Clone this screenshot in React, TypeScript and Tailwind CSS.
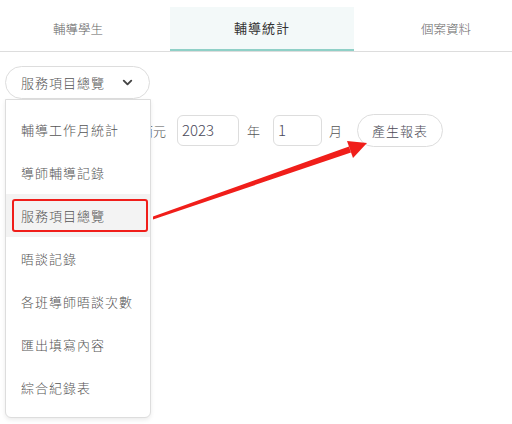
import React from 'react';
import { ChevronDown } from 'lucide-react';

const tabs = ['輔導學生', '輔導統計', '個案資料'];

const menuItems = [
  '輔導工作月統計',
  '導師輔導記錄',
  '服務項目總覽',
  '晤談記錄',
  '各班導師晤談次數',
  '匯出填寫內容',
  '綜合紀錄表',
];

const App = () => {
  return (
    <div
      className="relative w-full h-[424px] bg-white overflow-hidden font-light"
      style={{ fontFamily: '"Noto Sans CJK TC", "Noto Sans", sans-serif' }}
    >
      {/* tabs */}
      <div className="mt-[7px] flex border-b border-[#dddddd]">
        <div className="ml-[-14px] flex">
          {tabs.map((t, i) =>
            i === 1 ? (
              <div
                key={t}
                className="w-[184px] h-[44px] -mb-px flex items-center justify-center bg-[#f3f9f9] border-b-2 border-[#8fd0c7] text-[13px] tracking-[1px] text-[#333] font-normal"
              >
                {t}
              </div>
            ) : (
              <div
                key={t}
                className="w-[184px] h-[44px] flex items-center justify-center text-[12.5px] text-[#666]"
              >
                {t}
              </div>
            )
          )}
        </div>
      </div>

      {/* select */}
      <div className="mt-[14px] ml-[5px] w-[145px] h-[33px] rounded-full border border-[#dddddd] flex items-center justify-between pl-[15px] pr-[14px] text-[13px] tracking-[1px] text-[#555]">
        <span>服務項目總覽</span>
        <ChevronDown className="w-[15px] h-[15px] text-[#444]" strokeWidth={3} />
      </div>

      {/* form row */}
      <div className="mt-[15px] ml-[140px] flex items-center text-[13px] text-[#555]">
        <span>西元</span>
        <div className="ml-[11px] w-[62px] h-[31px] rounded-md border border-[#dddddd] flex items-center px-[4px] text-[15px] text-[#4a4a5a]">
          2023
        </div>
        <span className="ml-[8px]">年</span>
        <div className="ml-[13px] w-[49px] h-[31px] rounded-md border border-[#dddddd] flex items-center px-[4px] text-[15px] text-[#4a4a5a]">
          1
        </div>
        <span className="ml-[7px]">月</span>
        <button className="ml-[15px] w-[86px] h-[33px] rounded-full border border-[#dddddd] flex items-center justify-center text-[13px] tracking-[1px] text-[#4a4a55]">
          產生報表
        </button>
      </div>

      {/* dropdown menu */}
      <div className="absolute left-[5px] top-[99px] w-[146px] py-2 bg-white border border-[#dddddd] rounded-b-md shadow-[0_2px_4px_rgba(0,0,0,0.08)]">
        {menuItems.map((m, i) => (
          <div
            key={m}
            className={`h-[43px] flex items-center pl-[15px] text-[13px] tracking-[1px] text-[#555] ${
              i === 2 ? 'bg-[#f3f3f3]' : ''
            }`}
          >
            {m}
          </div>
        ))}
      </div>

      {/* annotation box */}
      <div className="absolute left-[12px] top-[199px] w-[136px] h-[33px] border-[2.5px] border-[#f01e1a] rounded-[3px]" />

      {/* annotation arrow */}
      <svg className="absolute left-0 top-0" width="512" height="424" viewBox="0 0 512 424">
        <polygon points="153,216.5 153,219.5 351,152.5 349,146.5" fill="#f01e1a" />
        <polygon points="367,143 347,141 353,158" fill="#f01e1a" />
      </svg>
    </div>
  );
};

export default App;
